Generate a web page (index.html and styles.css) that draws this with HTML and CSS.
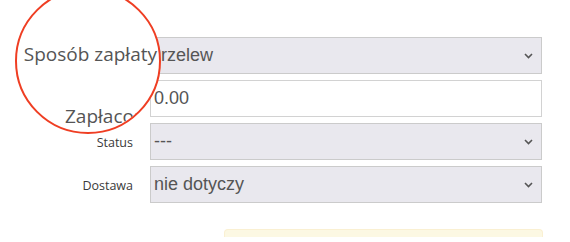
FILE: index.html
```html
<!DOCTYPE HTML>
<html>

<head>
    <meta charset="UTF-8">
    <title>Zamówienie - płatność</title>
    <meta name="viewport" content="width=device-width, initial-scale=1">
    <link rel="stylesheet" href="styles.css">
</head>

<body>
    <div class="form">
        <div class="row">
            <label>Sposób zapłaty</label>
            <div class="field select first">
                <span>Przelew</span>
                <svg class="chevron" width="9" height="6" viewBox="0 0 9 6"><path d="M1 1l3.5 3.5L8 1" fill="none" stroke="#555" stroke-width="1.6"/></svg>
            </div>
        </div>
        <div class="row">
            <label>Zapłacono</label>
            <div class="field input"><span>0.00</span></div>
        </div>
        <div class="row">
            <label>Status</label>
            <div class="field select">
                <span>---</span>
                <svg class="chevron" width="9" height="6" viewBox="0 0 9 6"><path d="M1 1l3.5 3.5L8 1" fill="none" stroke="#555" stroke-width="1.6"/></svg>
            </div>
        </div>
        <div class="row">
            <label>Dostawa</label>
            <div class="field select">
                <span>nie dotyczy</span>
                <svg class="chevron" width="9" height="6" viewBox="0 0 9 6"><path d="M1 1l3.5 3.5L8 1" fill="none" stroke="#555" stroke-width="1.6"/></svg>
            </div>
        </div>
        <div class="notice"></div>
    </div>

    <!-- lupa nad etykietami -->
    <div class="lens">
        <span>Sposób zapłaty</span>
        <span class="second">Zapłacono</span>
    </div>
</body>

</html>
```

FILE: styles.css
```css
html {
    font-family: "Open Sans", sans-serif;
}

body {
    margin: 0;
    position: relative;
    width: 570px;
    height: 242px;
    overflow: hidden;
    background: #fff;
}

.form {
    padding-top: 37px;
}

.row {
    display: flex;
    align-items: center;
    gap: 17px;
    margin-bottom: 6px;
}

.row label {
    width: 133px;
    text-align: right;
    font-size: 12.5px;
    color: #3a3a3a;
    padding-top: 2px;
}

.field {
    width: 392px;
    height: 37px;
    box-sizing: border-box;
    border: 1px solid #cbcbcb;
    padding: 0 3px;
    font-family: "Liberation Sans", Arial, sans-serif;
    font-size: 18px;
    color: #555;
    display: flex;
    align-items: center;
}

.select {
    background-color: #e9e8ee;
    justify-content: space-between;
    padding-right: 8px;
}

.first span {
    margin-left: -5px;
}

.input {
    background-color: #fff;
    border-color: #d2d2d2;
}

.chevron {
    margin-top: 1px;
}

.notice {
    margin: 26px 0 0 224px;
    width: 317px;
    height: 7px;
    background-color: #fcf8e3;
    border: 1px solid #faf0d2;
    border-bottom: none;
    border-radius: 4px 4px 0 0;
}

.lens {
    position: absolute;
    left: 15px;
    top: -12px;
    width: 146px;
    height: 146px;
    box-sizing: border-box;
    border: 2px solid #ef3e23;
    border-radius: 50%;
    background: #fff;
    overflow: hidden;
    display: flex;
    flex-direction: column;
    align-items: flex-end;
    padding: 52px 2px 0 0;
    font-size: 19px;
    line-height: 24px;
    color: #555;
    white-space: nowrap;
}

.lens .second {
    margin-top: 38px;
}
```
